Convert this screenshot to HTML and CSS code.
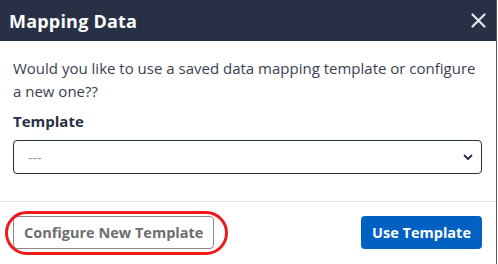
FILE: index.html
```html
<!DOCTYPE html>
<html lang="en">
<head>
  <meta charset="UTF-8" />
  <title>Mapping Data</title>
  <link rel="stylesheet" href="styles.css">
</head>
<body>
  <div class="modal">
    <header class="modal-header">
      <h2 class="modal-title">Mapping Data</h2>
      <button class="close-button" title="Close">
        <svg width="15" height="15" viewBox="0 0 15 15">
          <path d="M1.5 1.5 L13.5 13.5 M13.5 1.5 L1.5 13.5" stroke="#e4e6ec" stroke-width="2.2" stroke-linecap="round"/>
        </svg>
      </button>
    </header>

    <div class="modal-body">
      <p class="intro">Would you like to use a saved data mapping template or configure a new one??</p>
      <label class="field-label" for="template">Template</label>
      <div class="select-wrap">
        <select id="template" class="select">
          <option>---</option>
        </select>
        <svg class="select-arrow" width="10" height="7" viewBox="0 0 10 7">
          <path d="M1.5 1.5 L5 5 L8.5 1.5" fill="none" stroke="#283046" stroke-width="1.8" stroke-linecap="round" stroke-linejoin="round"/>
        </svg>
      </div>
    </div>

    <footer class="modal-footer">
      <div class="highlight-wrap">
        <button class="btn btn-outline">Configure New Template</button>
        <span class="ring"></span>
      </div>
      <button class="btn btn-primary">Use Template</button>
    </footer>
  </div>
</body>
</html>
```

FILE: styles.css
```css
body {
  margin: 0;
  font-family: "Open Sans", "DejaVu Sans", sans-serif;
  background: #ffffff;
  color: #283046;
}

.modal {
  width: 497px;
  height: 264px;
  border-right: 1px solid #5a5a5a;
  box-sizing: border-box;
  display: flex;
  flex-direction: column;
}

.modal-header {
  background: #283046;
  height: 41px;
  flex-shrink: 0;
  display: flex;
  align-items: center;
  justify-content: space-between;
  padding: 0 10px 0 9px;
}

.modal-title {
  margin: 0;
  color: #ffffff;
  font-size: 18px;
  font-weight: 700;
  letter-spacing: 0.2px;
}

.close-button {
  background: none;
  border: none;
  padding: 0;
  display: flex;
  cursor: pointer;
}

.modal-body {
  padding: 16px 13px 0 13px;
  height: 161px;
  flex-shrink: 0;
  box-sizing: border-box;
  border-bottom: 1px solid #e6e6e6;
}

.intro {
  margin: 0;
  font-size: 15px;
  line-height: 23px;
  color: #3a4152;
}

.field-label {
  display: block;
  margin-top: 8px;
  font-size: 15px;
  font-weight: 700;
  color: #283046;
}

.select-wrap {
  position: relative;
  margin-top: 9px;
  margin-right: 1px;
}

.select {
  width: 100%;
  height: 34px;
  border: 1.5px solid #283046;
  border-radius: 4px;
  background: #ffffff;
  padding: 0 14px;
  font-family: inherit;
  font-size: 14px;
  color: #9a9a9a;
  appearance: none;
  -webkit-appearance: none;
}

.select-arrow {
  position: absolute;
  right: 9px;
  top: 14px;
  pointer-events: none;
}

.modal-footer {
  display: flex;
  justify-content: space-between;
  align-items: center;
  padding: 14px 14px 0 13px;
}

.highlight-wrap {
  position: relative;
}

.ring {
  position: absolute;
  left: -8px;
  top: -5px;
  right: -14px;
  bottom: -6px;
  border: 3px solid #f0191a;
  border-radius: 22px;
  pointer-events: none;
}

.btn {
  font-family: inherit;
  font-size: 14.5px;
  font-weight: 700;
  height: 33px;
  border-radius: 4px;
  cursor: pointer;
}

.btn-outline {
  background: #ffffff;
  border: 1px solid #8a8a8a;
  color: #6e6e6e;
  padding: 0 10px;
}

.btn-primary {
  background: #0061c2;
  border: none;
  color: #ffffff;
  padding: 0 11px;
}
```
